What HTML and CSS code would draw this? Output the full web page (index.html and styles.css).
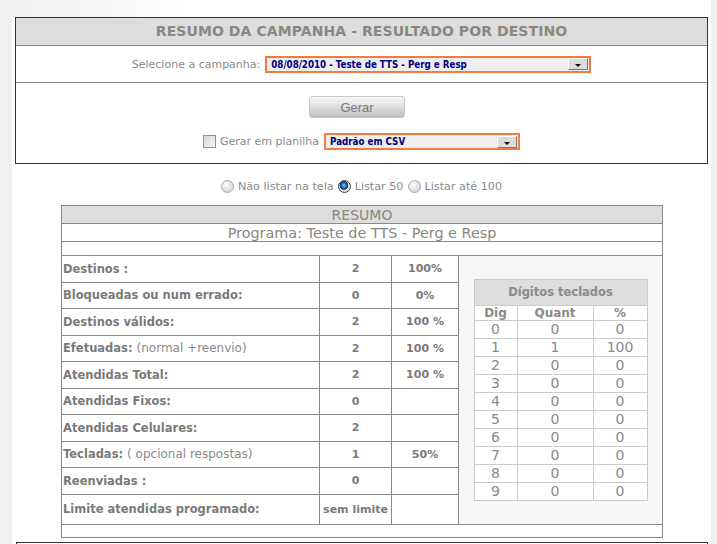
FILE: index.html
```html
<!DOCTYPE html>
<html lang="pt-BR">
<head>
  <meta charset="UTF-8" />
  <title>Resumo da campanha</title>
  <link rel="stylesheet" href="styles.css">
</head>
<body>
  <div class="page">
    <div class="campanha">
      <div class="campanha-titulo">RESUMO DA CAMPANHA - RESULTADO POR DESTINO</div>
      <div class="campanha-linha">
        <span>Selecione a campanha:</span>
        <div class="combo combo-larga"><span>08/08/2010 - Teste de TTS - Perg e Resp</span><i class="seta"></i></div>
      </div>
      <div class="campanha-acoes">
        <button class="botao">Gerar</button>
        <div class="planilha">
          <span class="check"></span>
          <span>Gerar em planilha</span>
          <div class="combo combo-csv"><span>Padrão em CSV</span><i class="seta"></i></div>
        </div>
      </div>
    </div>

    <div class="listagem">
      <span class="radio"></span><span>Não listar na tela</span>
      <span class="radio marcado"></span><span>Listar 50</span>
      <span class="radio"></span><span>Listar até 100</span>
    </div>

    <table class="resumo">
      <colgroup><col class="c-rotulo"><col class="c-valor"><col class="c-pct"><col></colgroup>
      <tr class="cab"><td colspan="4">RESUMO</td></tr>
      <tr class="cab programa"><td colspan="4">Programa: Teste de TTS - Perg e Resp</td></tr>
      <tr class="vazia"><td colspan="4"></td></tr>
      <tr class="dado">
        <td class="rotulo">Destinos :</td><td class="num">2</td><td class="num">100%</td>
        <td class="digitos" rowspan="10">
          <table class="teclas">
            <tr><th colspan="3" class="teclas-cab">Dígitos teclados</th></tr>
            <tr class="sub"><th>Dig</th><th>Quant</th><th>%</th></tr>
            <tr><td>0</td><td>0</td><td>0</td></tr>
            <tr><td>1</td><td>1</td><td>100</td></tr>
            <tr><td>2</td><td>0</td><td>0</td></tr>
            <tr><td>3</td><td>0</td><td>0</td></tr>
            <tr><td>4</td><td>0</td><td>0</td></tr>
            <tr><td>5</td><td>0</td><td>0</td></tr>
            <tr><td>6</td><td>0</td><td>0</td></tr>
            <tr><td>7</td><td>0</td><td>0</td></tr>
            <tr><td>8</td><td>0</td><td>0</td></tr>
            <tr><td>9</td><td>0</td><td>0</td></tr>
          </table>
        </td>
      </tr>
      <tr class="dado"><td class="rotulo">Bloqueadas ou num errado:</td><td class="num">0</td><td class="num">0%</td></tr>
      <tr class="dado"><td class="rotulo">Destinos válidos:</td><td class="num">2</td><td class="num">100 %</td></tr>
      <tr class="dado"><td class="rotulo">Efetuadas: <span class="obs">(normal +reenvio)</span></td><td class="num">2</td><td class="num">100 %</td></tr>
      <tr class="dado"><td class="rotulo">Atendidas Total:</td><td class="num">2</td><td class="num">100 %</td></tr>
      <tr class="dado"><td class="rotulo">Atendidas Fixos:</td><td class="num">0</td><td class="num"></td></tr>
      <tr class="dado"><td class="rotulo">Atendidas Celulares:</td><td class="num">2</td><td class="num"></td></tr>
      <tr class="dado"><td class="rotulo">Tecladas: <span class="obs">( opcional respostas)</span></td><td class="num">1</td><td class="num">50%</td></tr>
      <tr class="dado"><td class="rotulo">Reenviadas :</td><td class="num">0</td><td class="num"></td></tr>
      <tr class="dado ultima"><td class="rotulo">Limite atendidas programado:</td><td class="num">sem limite</td><td class="num"></td></tr>
      <tr class="vazia"><td colspan="4"></td></tr>
    </table>

    <div class="rodape"></div>
  </div>
</body>
</html>
```

FILE: styles.css
```css
body {
  margin: 0;
  background: #f0f0f0;
  font-family: 'DejaVu Sans', Verdana, sans-serif;
  color: #7f7f7f;
}
.page {
  margin-left: 12px;
  width: 699px;
  height: 544px;
  overflow: hidden;
  box-sizing: border-box;
  padding-top: 17px;
  background: linear-gradient(to right, #f0f0f0, #fff 180px) top left / 100% 17px no-repeat, #fff;
}
.campanha {
  margin-left: 3px;
  width: 693px;
  box-sizing: border-box;
  border: 1px solid #333;
}
.campanha-titulo {
  height: 27px;
  line-height: 27px;
  background: #dddddd;
  border-bottom: 1px solid #888;
  text-align: center;
  font-size: 14px;
  font-weight: bold;
  letter-spacing: 0.08px;
  color: #8a8680;
}
.campanha-linha {
  height: 36px;
  border-bottom: 1px solid #888;
  display: flex;
  align-items: center;
  justify-content: center;
  gap: 5px;
  font-size: 11px;
  color: #8a8a8a;
}
.campanha-acoes {
  height: 80px;
  box-sizing: border-box;
  padding-top: 13px;
  display: flex;
  flex-direction: column;
  align-items: center;
  gap: 15px;
}
.combo {
  display: flex;
  align-items: center;
  justify-content: space-between;
  height: 17px;
  box-sizing: border-box;
  border: 2px solid #f07c40;
  background: #eeeeee;
  padding-right: 1px;
}
.combo span {
  padding-left: 4px;
  font-family: 'DejaVu Sans Condensed', 'DejaVu Sans', sans-serif;
  font-size: 9.7px;
  font-weight: bold;
  color: #000080;
}
.combo-larga { width: 326px; }
.combo-csv { width: 196px; }
.seta {
  position: relative;
  width: 20px;
  height: 12px;
  box-sizing: border-box;
  background: #dcdcdc;
  border: 1px solid #fff;
  border-right-color: #777;
  border-bottom-color: #777;
}
.seta::after {
  content: '';
  position: absolute;
  left: 6px;
  top: 5px;
  border-left: 3px solid transparent;
  border-right: 3px solid transparent;
  border-top: 3px solid #000;
}
.botao {
  width: 96px;
  height: 22px;
  margin-left: -9px;
  border: 1px solid #c8c8c8;
  border-radius: 3px;
  background: linear-gradient(#f7f7f7, #e2e2e2 45%, #bdbdbd);
  font-family: 'Liberation Sans', Arial, sans-serif;
  font-size: 13px;
  color: #777;
  padding: 0;
}
.planilha {
  display: flex;
  align-items: center;
  font-size: 11px;
  color: #8a8a8a;
}
.check {
  width: 13px;
  height: 13px;
  box-sizing: border-box;
  border: 1px solid #8f8f8f;
  background: linear-gradient(135deg, #d6d6d6, #f8f8f8);
  margin-right: 4px;
}
.planilha .combo { margin-left: 5px; }
.listagem {
  margin-top: 14px;
  height: 16px;
  display: flex;
  align-items: center;
  justify-content: center;
  font-size: 11.2px;
  color: #8a8a8a;
}
.radio {
  width: 13px;
  height: 13px;
  box-sizing: border-box;
  border-radius: 50%;
  border: 1px solid #a8a8a8;
  background: radial-gradient(circle at 40% 35%, #fff, #d8d8d8 70%);
  margin: 0 4px 0 4px;
}
.radio:first-child { margin-left: 0; }
.radio.marcado {
  border-color: #3c3c3c;
  background: radial-gradient(circle at 45% 40%, #9fd0f5 0, #1f6fb0 25%, #0f3a66 45%, #e8e8e8 52%, #cfcfcf 100%);
}
.resumo {
  margin: 11px 0 0 49px;
  width: 602px;
  border-collapse: collapse;
  table-layout: fixed;
  border: 1px solid #333;
}
.c-rotulo { width: 258px; }
.c-valor { width: 72px; }
.c-pct { width: 67px; }
.resumo > tbody > tr > td {
  border: 1px solid #888;
  padding: 0;
}
.cab td {
  height: 17px;
  line-height: 16px;
  text-align: center;
  font-size: 14px;
  color: #8a8680;
  background: #dddddd;
}
.cab.programa td {
  background: #fff;
  font-size: 14.4px;
}
.vazia td { height: 13px; }
.resumo > tbody > tr.vazia:last-child > td { height: 12px; }
.dado td { height: 25.5px; }
.dado.ultima td { height: 29px; }
.rotulo {
  padding-left: 1px !important;
  font-size: 11.5px;
  font-weight: bold;
  color: #7a7a7a;
}
.obs {
  font-size: 12px;
  font-weight: normal;
  color: #8a8a8a;
}
.num {
  text-align: center;
  font-size: 11px;
  font-weight: bold;
  color: #7a7a7a;
}
.digitos {
  background: #f7f7f7;
  vertical-align: middle;
}
.teclas {
  width: 174px;
  margin: 0 auto;
  border-collapse: collapse;
  background: #fff;
  border: 1px solid #ccc;
}
.teclas th,
.teclas td {
  border: 1px solid #cccccc;
  padding: 0;
  text-align: center;
  color: #8a8a8a;
}
.teclas td {
  height: 17px;
  font-size: 14px;
  line-height: 17px;
}
.teclas-cab {
  height: 25px;
  background: #dddddd;
  font-size: 11.5px;
}
.sub th {
  height: 14px;
  line-height: 14px;
  font-size: 12px;
}
.sub th:first-child { width: 42px; }
.sub th:nth-child(2) { width: 75px; }
.rodape {
  margin: 4px 0 0 4px;
  width: 692px;
  height: 20px;
  box-sizing: border-box;
  border: 1px solid #333;
}
```
